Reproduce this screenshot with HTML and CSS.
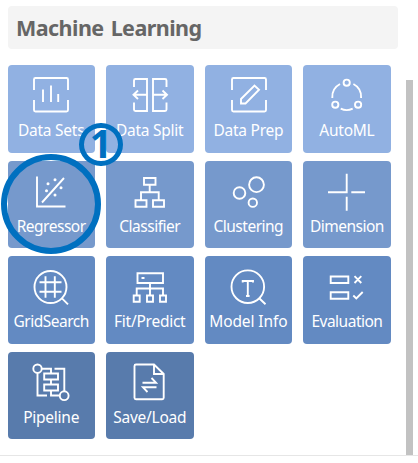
FILE: index.html
```html
<!DOCTYPE html>
<html lang="en">
<head>
<meta charset="utf-8">
<title>Machine Learning</title>
<link rel="stylesheet" href="styles.css">
</head>
<body>
<main class="panel">
  <h1 class="heading"><span>Machine Learning</span></h1>
  <div class="content">
    <div class="grid">
      <button class="tile light"><svg viewBox="0 0 88 53"><path d="M27 25V14.500Q27 13 28.500 13H59.500Q61 13 61 14.500V25M27 35V45Q27 46.500 28.500 46.500H59.500Q61 46.500 61 45V35M36 24.500V37M44 20.500V37M51.200 29V37"/></svg><span class="label">Data Sets</span></button>
      <button class="tile light"><svg viewBox="0 0 88 53"><path d="M28 22V15.500Q28 14 29.500 14H41V46H29.500Q28 46 28 44.500V37.500M60.500 22V15.500Q60.500 14 59 14H47V46H59Q60.500 46 60.500 44.500V37.500M41 29.800H28M32 25.500L27.500 29.800L32 34M47 29.800H60.500M56.500 25.500L61 29.800L56.500 34"/></svg><span class="label">Data Split</span></button>
      <button class="tile light"><svg viewBox="0 0 88 53"><path d="M27 25V14.500Q27 13 28.500 13H59.500Q61 13 61 14.500V25M27 35V45Q27 46.500 28.500 46.500H59.500Q61 46.500 61 45V35M36 38.500V34L49.500 20.500L54 24.700L40.500 38.500Z"/></svg><span class="label">Data Prep</span></button>
      <button class="tile light"><svg viewBox="0 0 88 53"><circle cx="43.700" cy="17.700" r="3.100"/><circle cx="32.300" cy="39.700" r="3.100"/><circle cx="55.100" cy="39.700" r="3.100"/><path d="M29.300 33A14.700 14.700 0 0 1 37 19M50.400 19A14.700 14.700 0 0 1 58.100 33M37.700 43.700Q43.700 46.600 49.700 43.700"/></svg><span class="label">AutoML</span></button>

      <button class="tile mid"><svg viewBox="0 0 88 53"><path d="M30 15.500V45.500H58.500M35 41.500L57 17"/><g class="dots"><circle cx="41" cy="22.700" r="1.500"/><circle cx="48" cy="18.700" r="1.500"/><circle cx="39.500" cy="29.700" r="1.500"/><circle cx="54" cy="26.700" r="1.500"/><circle cx="48" cy="34" r="1.500"/></g></svg><span class="label tight">Regressor</span></button>
      <button class="tile mid"><svg viewBox="0 0 88 53"><path d="M38 17H49.500V23.700H38ZM29.500 39.200H40.500V45.700H29.500ZM47 39.200H58V45.700H47ZM43.700 23.700V31.300M35 39V31.300H52.700V39"/></svg><span class="label tight">Classifier</span></button>
      <button class="tile mid"><svg viewBox="0 0 88 53"><circle cx="34.500" cy="32" r="5.800"/><circle cx="51.500" cy="23.700" r="7.400"/><circle cx="47.800" cy="41.700" r="4.200"/></svg><span class="label tight">Clustering</span></button>
      <button class="tile mid"><svg viewBox="0 0 88 53"><path d="M43.700 12.700V31.300H25M48.300 31.300H62M43.700 35.700V49.700"/></svg><span class="label tight">Dimension</span></button>

      <button class="tile deep"><svg viewBox="0 0 88 53"><circle cx="43.500" cy="31" r="16"/><path d="M55 42.300L61 48.300M38.500 20.300V41.700M47.800 20.300V41.700M32.500 26.300H54.500M32.500 35.700H54.500"/></svg><span class="label tight">GridSearch</span></button>
      <button class="tile deep"><svg viewBox="0 0 88 53"><path d="M31.500 17.300H57V27H31.500ZM35.500 22H38.500M44 27V39.500M30.700 39.500V32.500H57V39.500M27.700 39.500H33.700V45.700H27.700ZM41 39.500H47V45.700H41ZM54 39.500H60V45.700H54Z"/></svg><span class="label">Fit/Predict</span></button>
      <button class="tile deep"><svg viewBox="0 0 88 53"><circle cx="42.800" cy="30.700" r="16.300"/><path d="M54.500 42.500L60.500 48.300M37.700 26.500V25H48V26.500M42.800 25V40M41 40H44.600"/></svg><span class="label wide">Model Info</span></button>
      <button class="tile deep"><svg viewBox="0 0 88 53"><path d="M27.700 20.500H45.300V27H27.700ZM27.700 36.300H45.300V42.800H27.700ZM51.500 20.200L58.300 27M58.300 20.200L51.500 27M50.300 39.500L53.300 42.500L59.700 36"/></svg><span class="label tight">Evaluation</span></button>

      <button class="tile dark"><svg viewBox="0 0 88 53"><circle cx="30.500" cy="16.700" r="4.200"/><circle cx="57.200" cy="43.700" r="4.400"/><path d="M30.500 21V43.500H40M35 16.700H44V21.500M37.200 21.500H51V27.500H37.200ZM44 27.500V32.500M37.200 32.500H51V38.500H37.200ZM44 38.500V43.500H52.700M47.500 16.700H57.300V39"/></svg><span class="label">Pipeline</span></button>
      <button class="tile dark"><svg viewBox="0 0 88 53"><path d="M30 12.500H48L57.700 22V45.700Q57.700 47.200 56.200 47.200H30Q28.500 47.200 28.500 45.700V14Q28.500 12.500 30 12.500ZM48 12.500V22H57.700M36.500 30.700H50L45.500 26M50.500 35.300H37L41.500 40"/></svg><span class="label">Save/Load</span></button>
    </div>
    <div class="scrollbar"></div>
  </div>
  <div class="ring"></div>
  <div class="badge">1</div>
</main>
</body>
</html>
```
FILE: styles.css
```css
* { box-sizing: border-box; }
body { margin: 0; background: #fff; font-family: "Noto Sans", "Open Sans", sans-serif; }
.panel { position: relative; width: 418px; height: 463px; padding: 6px 5px 0 7.5px; overflow: hidden; }
.heading {
  display: flex; align-items: center; width: 390px; height: 43px; margin: 0; padding: 1px 0 0 8.500px;
  border-radius: 4px; background: #f4f4f4; color: #666; font-size: 21.500px; font-weight: 700; line-height: 1; letter-spacing: -0.550px; word-spacing: 2px;
}
.content {
  display: flex; justify-content: space-between; height: 406.500px;
  margin: 0 -5px 0 -7.500px; padding: 16px 5px 0 7.500px; border-bottom: 1.500px solid #e6e6e6;
}
.grid { display: grid; grid-template-columns: repeat(4, 87.800px); grid-auto-rows: 87.500px; gap: 8.100px 10.800px; align-content: start; }
.tile {
  display: flex; flex-direction: column; align-items: center; padding: 0;
  border: 0; border-radius: 4px; color: #fff; font-family: inherit; overflow: hidden;
}
.light { background: #91b1e2; }
.mid { background: #7699cc; }
.deep { background: #638ac2; }
.dark { background: #587bac; }
.tile svg { display: block; flex: none; width: 88px; height: 53px; fill: none; stroke: #fff; stroke-width: 1.900; }
.tile .dots { fill: #fff; stroke: none; }
.label { padding-right: 0.500px; font-size: 15.500px; line-height: 24px; letter-spacing: -0.250px; white-space: nowrap; }
.label.tight { letter-spacing: -0.500px; }
.label.wide { letter-spacing: -0.100px; }
.scrollbar { width: 7.500px; height: 375px; margin-top: 15px; background: #c2c2c2; }
.ring { position: absolute; left: 1px; top: 153.500px; width: 100px; height: 100px; border: 6px solid #0070c0; border-radius: 50%; }
.badge {
  position: absolute; left: 79.300px; top: 123px; width: 43.400px; height: 43px; border: 5px solid #0070c0; border-radius: 50%;
  color: #0070c0; font-family: "Open Sans", sans-serif; font-size: 39px; font-weight: 700; line-height: 30px; text-align: center;
}
```
